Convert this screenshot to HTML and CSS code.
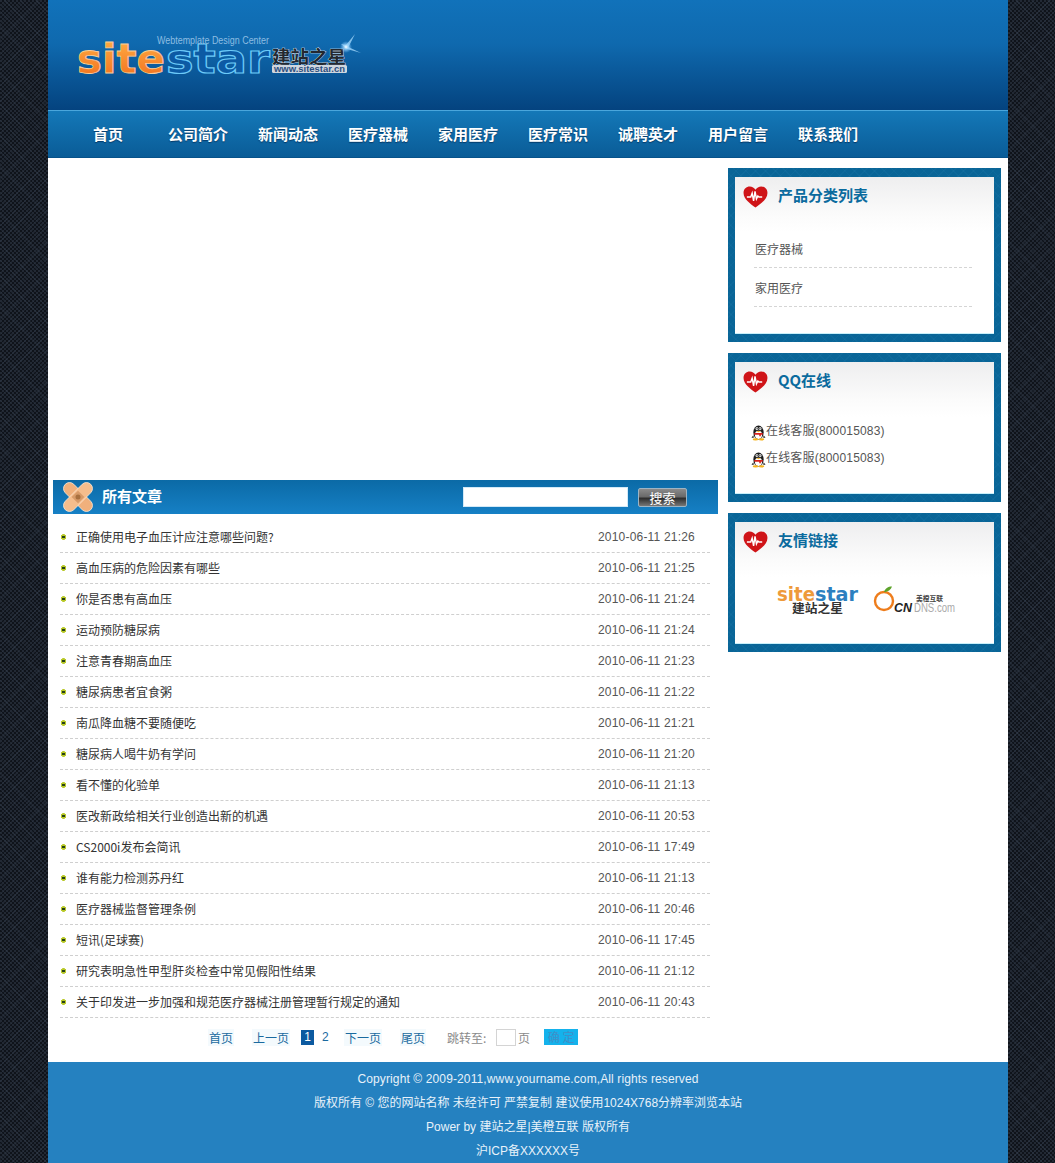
FILE: index.html
```html
<!DOCTYPE html>
<html lang="zh-CN">
<head>
<meta charset="utf-8">
<title>Sitestar 医疗模板</title>
<link rel="stylesheet" href="styles.css">
</head>
<body>
<svg class="defs" width="0" height="0" aria-hidden="true">
  <defs>
    <linearGradient id="orange" x1="0" y1="0" x2="0" y2="1"><stop offset="0" stop-color="#ffb347"/><stop offset="1" stop-color="#f26a1b"/></linearGradient>
    <symbol id="heart" viewBox="0 0 26 23">
      <path d="M13 22.500C8 18.500 0.500 14 0.500 7.200C0.500 3 3.500 0.500 7 0.500C9.500 0.500 11.800 1.800 13 4C14.200 1.800 16.500 0.500 19 0.500C22.500 0.500 25.500 3 25.500 7.200C25.500 14 18 18.500 13 22.500Z" fill="#cf1418"/>
      <path d="M4 11.500H8L9.500 7.500L11 15.500L12.500 5.500L14 13.500L15.500 10.500L16.500 11.500H20" fill="none" stroke="#fff" stroke-width="1.500"/>
    </symbol>
    <symbol id="qq" viewBox="0 0 16 18">
      <ellipse cx="8" cy="9" rx="5.500" ry="7.500" fill="#1c1c1c"/>
      <ellipse cx="8" cy="11.500" rx="3.800" ry="4.500" fill="#fff"/>
      <circle cx="6.300" cy="5" r="1.500" fill="#fff"/><circle cx="9.700" cy="5" r="1.500" fill="#fff"/>
      <circle cx="6.500" cy="5" r=".7" fill="#111"/><circle cx="9.500" cy="5" r=".7" fill="#111"/>
      <path d="M5.500 7.300H10.500L8 8.800Z" fill="#f5b21a"/>
      <path d="M3.500 9.500H12.500V11.300H10.500V13H8.800V11.300H3.500Z" fill="#d8201c"/>
      <path d="M2.500 12L0.500 14.500L3 14.500ZM13.500 12L15.500 14.500L13 14.500Z" fill="#1c1c1c"/>
      <ellipse cx="4.800" cy="16.300" rx="3" ry="1.300" fill="#f5b21a"/><ellipse cx="11.200" cy="16.300" rx="3" ry="1.300" fill="#f5b21a"/>
    </symbol>
  </defs>
</svg>
<div class="page">
  <header class="masthead">
    <svg class="logo" width="290" height="50" viewBox="0 0 290 50" role="img" aria-label="sitestar 建站之星">
      <defs>
        <radialGradient id="glow"><stop offset="0" stop-color="#fff"/><stop offset=".35" stop-color="#a8dcff" stop-opacity=".8"/><stop offset="1" stop-color="#7cc4ff" stop-opacity="0"/></radialGradient>
      </defs>
      <text class="logo-word logo-site" x="4" y="42" textLength="88" lengthAdjust="spacingAndGlyphs">site</text>
      <text class="logo-word logo-star" x="93" y="42" textLength="104" lengthAdjust="spacingAndGlyphs">star</text>
      <text class="logo-tag" x="84" y="13" textLength="112" lengthAdjust="spacingAndGlyphs">Webtemplate Design Center</text>
      <text class="logo-cn" x="199" y="32" textLength="74" lengthAdjust="spacingAndGlyphs">建站之星</text>
      <rect x="199" y="34" width="75" height="8" rx="1.500" fill="#cfd6de"/>
      <text class="logo-url" x="201" y="41" textLength="71" lengthAdjust="spacingAndGlyphs">www.sitestar.cn</text>
      <path d="M273 14L282 3L275.500 16L288 22L274 18L268 13Z" fill="#a8dcff" opacity=".75"/>
      <circle cx="273" cy="16" r="6" fill="url(#glow)"/>
    </svg>
  </header>
  <nav class="nav">
    <a class="nav-item">首页</a><a class="nav-item">公司简介</a><a class="nav-item">新闻动态</a><a class="nav-item">医疗器械</a><a class="nav-item">家用医疗</a><a class="nav-item">医疗常识</a><a class="nav-item">诚聘英才</a><a class="nav-item">用户留言</a><a class="nav-item">联系我们</a>
  </nav>
  <div class="main">
    <main class="content">
      <div class="banner"></div>
      <div class="bar">
        <svg class="bandage" width="30" height="30" viewBox="0 0 30 30" aria-hidden="true">
          <g stroke="#fbe6d2" stroke-width=".8">
            <rect x="-3" y="9" width="36" height="12" rx="6" transform="rotate(45 15 15)" fill="#f0b07c"/>
            <rect x="-3" y="9" width="36" height="12" rx="6" transform="rotate(-45 15 15)" fill="#f5bd8c"/>
          </g>
          <rect x="10.500" y="10.500" width="9" height="9" transform="rotate(45 15 15)" fill="#d79a68"/>
          <circle cx="15" cy="15" r="2.500" fill="#a8703f"/>
        </svg>
        <h2 class="bar-title">所有文章</h2>
        <input class="search-input" type="text" aria-label="搜索">
        <button class="search-button" type="button">搜索</button>
      </div>
      <ul class="articles">
        <li class="article"><a class="article-title">正确使用电子血压计应注意哪些问题?</a><time class="article-date">2010-06-11 21:26</time></li>
        <li class="article"><a class="article-title">高血压病的危险因素有哪些</a><time class="article-date">2010-06-11 21:25</time></li>
        <li class="article"><a class="article-title">你是否患有高血压</a><time class="article-date">2010-06-11 21:24</time></li>
        <li class="article"><a class="article-title">运动预防糖尿病</a><time class="article-date">2010-06-11 21:24</time></li>
        <li class="article"><a class="article-title">注意青春期高血压</a><time class="article-date">2010-06-11 21:23</time></li>
        <li class="article"><a class="article-title">糖尿病患者宜食粥</a><time class="article-date">2010-06-11 21:22</time></li>
        <li class="article"><a class="article-title">南瓜降血糖不要随便吃</a><time class="article-date">2010-06-11 21:21</time></li>
        <li class="article"><a class="article-title">糖尿病人喝牛奶有学问</a><time class="article-date">2010-06-11 21:20</time></li>
        <li class="article"><a class="article-title">看不懂的化验单</a><time class="article-date">2010-06-11 21:13</time></li>
        <li class="article"><a class="article-title">医改新政给相关行业创造出新的机遇</a><time class="article-date">2010-06-11 20:53</time></li>
        <li class="article"><a class="article-title">CS2000i发布会简讯</a><time class="article-date">2010-06-11 17:49</time></li>
        <li class="article"><a class="article-title">谁有能力检测苏丹红</a><time class="article-date">2010-06-11 21:13</time></li>
        <li class="article"><a class="article-title">医疗器械监督管理条例</a><time class="article-date">2010-06-11 20:46</time></li>
        <li class="article"><a class="article-title">短讯(足球赛)</a><time class="article-date">2010-06-11 17:45</time></li>
        <li class="article"><a class="article-title">研究表明急性甲型肝炎检查中常见假阳性结果</a><time class="article-date">2010-06-11 21:12</time></li>
        <li class="article"><a class="article-title">关于印发进一步加强和规范医疗器械注册管理暂行规定的通知</a><time class="article-date">2010-06-11 20:43</time></li>
      </ul>
      <div class="pager">
        <a class="pager-link pager-first">首页</a>
        <a class="pager-link pager-prev">上一页</a>
        <span class="pager-current">1</span>
        <a class="pager-num">2</a>
        <a class="pager-link pager-next">下一页</a>
        <a class="pager-link pager-last">尾页</a>
        <span class="pager-jump">跳转至:</span>
        <input class="pager-input" type="text" aria-label="页码">
        <span class="pager-unit">页</span>
        <button class="pager-go" type="button">确 定</button>
      </div>
    </main>
    <aside class="sidebar">
      <section class="box">
        <div class="box-inner box-cats">
          <div class="box-head"><svg class="heart"><use href="#heart"/></svg><h3 class="box-title">产品分类列表</h3></div>
          <ul class="cats">
            <li class="cat">医疗器械</li>
            <li class="cat">家用医疗</li>
          </ul>
        </div>
      </section>
      <section class="box">
        <div class="box-inner box-qq">
          <div class="box-head"><svg class="heart"><use href="#heart"/></svg><h3 class="box-title">QQ在线</h3></div>
          <ul class="qqs">
            <li class="qq-row"><svg class="qq-icon"><use href="#qq"/></svg><span class="qq-text">在线客服(800015083)</span></li>
            <li class="qq-row"><svg class="qq-icon"><use href="#qq"/></svg><span class="qq-text">在线客服(800015083)</span></li>
          </ul>
        </div>
      </section>
      <section class="box">
        <div class="box-inner box-links">
          <div class="box-head"><svg class="heart"><use href="#heart"/></svg><h3 class="box-title">友情链接</h3></div>
          <div class="friends">
            <svg class="friend" width="84" height="30" viewBox="0 0 84 30" role="img" aria-label="sitestar 建站之星">
              <text class="mini-word mini-site" x="1" y="16" textLength="38" lengthAdjust="spacingAndGlyphs">site</text>
              <text class="mini-word mini-star" x="39" y="16" textLength="43" lengthAdjust="spacingAndGlyphs">star</text>
              <text class="mini-cn" x="16" y="28" textLength="51" lengthAdjust="spacingAndGlyphs">建站之星</text>
            </svg>
            <svg class="friend" width="86" height="30" viewBox="0 0 86 30" role="img" aria-label="美橙互联 CNDNS.com">
              <circle cx="13" cy="16" r="9" fill="none" stroke="#ee7d1c" stroke-width="2.400"/>
              <path d="M13 7C14 3.500 17 1.500 21 1.500C20 4.500 17 7 13 7Z" fill="#5da32b"/>
              <text class="ocn-top" x="45" y="16" textLength="27" lengthAdjust="spacingAndGlyphs">美橙互联</text>
              <text class="ocn-cn" x="23" y="27" textLength="18" lengthAdjust="spacingAndGlyphs">CN</text>
              <text class="ocn-dns" x="43" y="27" textLength="41" lengthAdjust="spacingAndGlyphs">DNS.com</text>
            </svg>
          </div>
        </div>
      </section>
    </aside>
  </div>
  <footer class="footer">
    <p class="footer-line footer-copy">Copyright © 2009-2011,www.yourname.com,All rights reserved</p>
    <p class="footer-line">版权所有 © 您的网站名称 未经许可 严禁复制 建议使用1024X768分辨率浏览本站</p>
    <p class="footer-line">Power by 建站之星|美橙互联 版权所有</p>
    <p class="footer-line">沪ICP备XXXXXX号</p>
  </footer>
</div>
</body>
</html>
```
FILE: styles.css
```css
* { box-sizing: border-box; }
html, body { margin: 0; padding: 0; }
body {
  background-color: #151a23;
  background-image:
    repeating-linear-gradient(45deg, rgba(70,85,105,.16) 0 1px, transparent 1px 11px),
    repeating-linear-gradient(-45deg, rgba(70,85,105,.16) 0 1px, transparent 1px 11px),
    repeating-conic-gradient(#0f131a 0 25%, #222934 0 50%);
  background-size: auto, auto, 4px 4px;
  font-family: "Liberation Sans", "Noto Sans CJK SC", sans-serif;
  font-size: 12px;
  color: #444;
}
.defs { position: absolute; }
ul { list-style: none; margin: 0; padding: 0; }
h2, h3, p { margin: 0; }
.page { width: 960px; margin-left: 48px; background: #fff; height: 1163px; overflow: hidden; }

.masthead {
  height: 110px;
  padding: 31px 0 0 25px;
  background: linear-gradient(#1172ba 0%, #0f69ae 40%, #04437f 100%);
}
.logo { display: block; overflow: visible; }
.logo-tag { font: 10px "Liberation Sans", sans-serif; fill: #8dbde2; }
.logo-word { font: 700 41px "DejaVu Sans", sans-serif; }
.logo-site { fill: url(#orange); stroke: #f9cf9a; stroke-width: .8; }
.logo-star { fill: #0c5aa4; stroke: #6ccaf8; stroke-width: 1.200; }
.logo-cn { font: 700 17px "Noto Sans CJK SC", sans-serif; fill: #232830; stroke: #e8edf2; stroke-width: .7; paint-order: stroke; }
.logo-url { font: 700 8.500px "Liberation Sans", sans-serif; fill: #2c4f80; }

.nav {
  display: flex;
  height: 48px;
  padding-left: 15px;
  border-top: 1px solid #4aa6dc;
  border-bottom: 1px solid #07528a;
  background: linear-gradient(#1478b8, #0a5c97);
}
.nav-item {
  width: 90px;
  text-align: center;
  font: 700 15px/46px "Noto Sans CJK SC", sans-serif;
  color: #fff;
  text-shadow: 0 1px 1px rgba(0,40,80,.7);
}

.main { display: flex; height: 904px; }
.content { width: 670px; padding-left: 5px; }
.banner { height: 322px; }
.bar {
  display: flex;
  align-items: center;
  height: 34px;
  padding-left: 10px;
  background: linear-gradient(#0b6aa6, #1680c5);
}
.bandage { flex: none; }
.bar-title {
  width: 361px;
  margin-left: 9px;
  padding-bottom: 3px;
  font: 700 15px "Noto Sans CJK SC", sans-serif;
  color: #fff;
}
.search-input {
  width: 165px;
  height: 20px;
  padding: 0;
  border: 1px solid #d3e9f7;
  background: #fff;
}
.search-button {
  width: 49px;
  height: 19px;
  margin-left: 10px;
  padding: 0;
  border: 1px solid #9db4c4;
  border-radius: 2px;
  background: linear-gradient(#8a8a8a 0%, #6a6a6a 45%, #2e2e2e 55%, #777 100%);
  font: 13px/15px "Noto Sans CJK SC", sans-serif;
  color: #fff;
}

.articles { margin: 8px 0 0 7px; width: 650px; }
.article {
  display: flex;
  justify-content: space-between;
  align-items: center;
  height: 31px;
  padding: 0 15px 0 16px;
  border-bottom: 1px dashed #cfcfcf;
  background: radial-gradient(circle at 3.500px 15px, #26401a 0 1.200px, #b9c92a 1.300px 2.600px, transparent 3px);
}
.article-title { margin-top: -2px; font: 12px "Noto Sans CJK SC", sans-serif; color: #333; }
.article-date { font-size: 12px; letter-spacing: .2px; color: #555; }

.pager {
  display: flex;
  align-items: center;
  height: 44px;
  padding: 0 0 6px 155px;
  font: 12px "Noto Sans CJK SC", sans-serif;
  color: #8a8a8a;
}
.pager-link { color: #1a6a9f; background: #f4fafd; padding: 0 1px; white-space: nowrap; }
.pager-prev { margin-left: 18px; }
.pager-current {
  width: 13px;
  height: 15px;
  margin-left: 11px;
  background: #0c5aa0;
  color: #fff;
  font: 12px/15px "Liberation Sans", sans-serif;
  text-align: center;
}
.pager-num { margin-left: 8px; width: 8px; color: #1a6a9f; font: 12px "Liberation Sans", sans-serif; }
.pager-next { margin-left: 14px; }
.pager-last { margin-left: 18px; }
.pager-jump { margin-left: 21px; width: 44px; white-space: nowrap; }
.pager-input {
  width: 20px;
  height: 17px;
  margin-left: 5px;
  padding: 0;
  border: 1px solid #d4d4d4;
  background: #fff;
}
.pager-unit { margin-left: 2px; }
.pager-go {
  width: 34px;
  height: 16px;
  margin-left: 14px;
  padding: 0;
  border: 0;
  background: #14b2ec;
  font: 12px/16px "Noto Sans CJK SC", sans-serif;
  color: #3f8fc8;
}

.sidebar { width: 273px; margin-left: 10px; padding-top: 10px; display: flex; flex-direction: column; gap: 11px; }
.box {
  padding: 9px 7px;
  background-color: #096597;
  background-image:
    repeating-linear-gradient(45deg, rgba(60,150,200,.09) 0 1px, transparent 1px 7px),
    repeating-linear-gradient(-45deg, rgba(60,150,200,.09) 0 1px, transparent 1px 7px);
}
.box-inner {
  background: linear-gradient(#eeeeef 0, #fbfbfb 38px, #fff 55px);
  box-shadow: 0 1px 0 #c8f0fa;
}
.box-cats { height: 156px; }
.box-qq { height: 131px; }
.box-links { height: 121px; }
.box-head { display: flex; align-items: center; height: 39px; padding-left: 8px; }
.heart { width: 25px; height: 22px; flex: none; }
.box-title {
  margin-left: 10px;
  padding-bottom: 4px;
  font: 700 15px "Noto Sans CJK SC", sans-serif;
  color: #0b6b9e;
}
.cats { margin: 13px 22px 0 19px; }
.cat {
  height: 39px;
  padding-left: 1px;
  border-bottom: 1px dashed #d5d5d5;
  font: 12px/40px "Noto Sans CJK SC", sans-serif;
  color: #555;
}
.qqs { margin: 15px 0 0 16px; }
.qq-row { display: flex; align-items: center; height: 27px; }
.qq-icon { width: 15px; height: 17px; flex: none; margin-top: 5px; }
.qq-text { font-size: 12px; letter-spacing: .18px; color: #555; }
.friends { display: flex; gap: 11px; margin: 24px 0 0 41px; }
.friend { overflow: visible; }
.mini-word { font: 700 19px "DejaVu Sans", sans-serif; }
.mini-site { fill: #ee9a3a; }
.mini-star { fill: #2c7fbf; }
.mini-cn { font: 700 12px "Noto Sans CJK SC", sans-serif; fill: #333; }
.ocn-top { font: 700 7px "Noto Sans CJK SC", sans-serif; fill: #444; }
.ocn-cn { font: italic 700 13px "Liberation Sans", sans-serif; fill: #222; }
.ocn-dns { font: 12px "Liberation Sans", sans-serif; fill: #aaa; }

.footer {
  height: 101px;
  padding-top: 5px;
  background: #2581c0;
  text-align: center;
  font-size: 12px;
  color: #e8f2fa;
}
.footer-line { line-height: 24px; }
.footer-copy { letter-spacing: .12px; }
```
